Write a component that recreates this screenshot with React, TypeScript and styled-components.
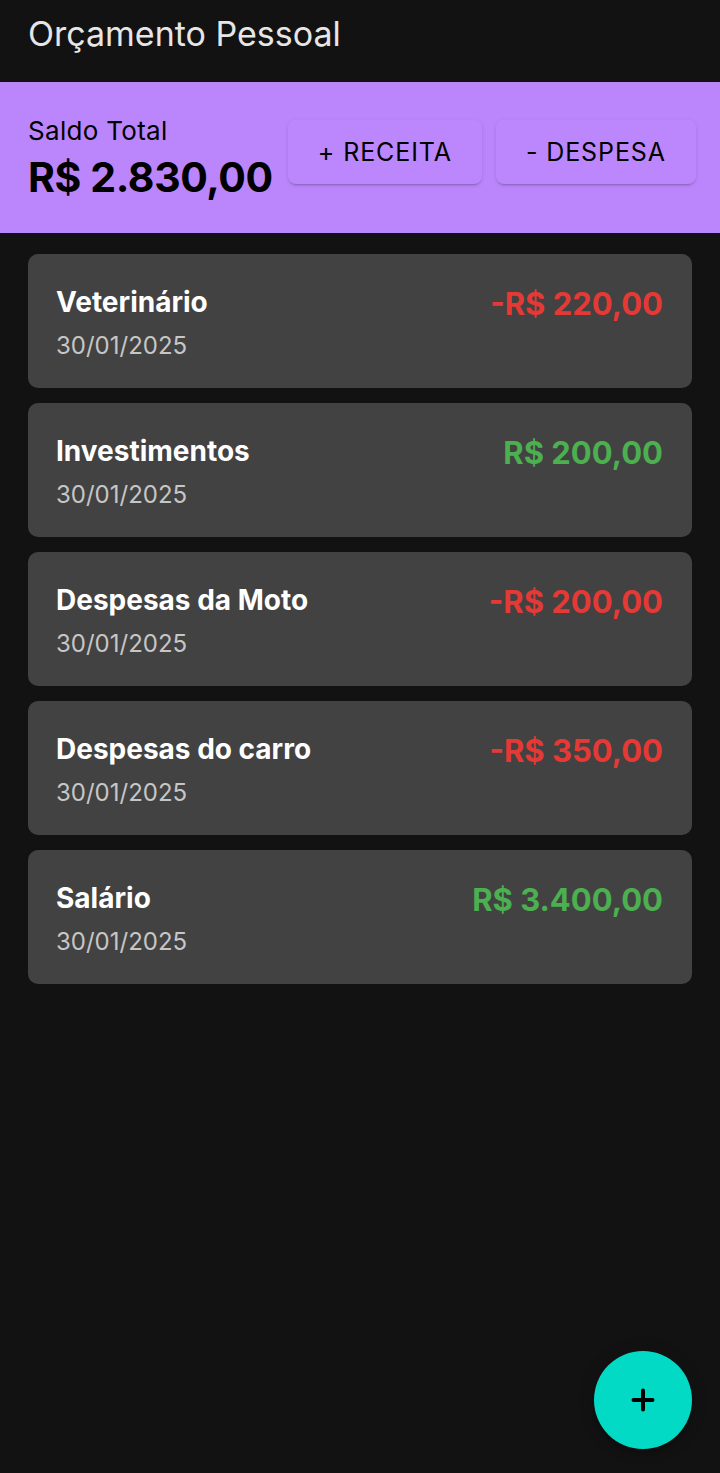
import styled, { createGlobalStyle } from 'styled-components';

interface Lancamento {
  descricao: string;
  data: string;
  valor: number;
}

const lancamentos: Lancamento[] = [
  { descricao: 'Veterinário', data: '30/01/2025', valor: -220 },
  { descricao: 'Investimentos', data: '30/01/2025', valor: 200 },
  { descricao: 'Despesas da Moto', data: '30/01/2025', valor: -200 },
  { descricao: 'Despesas do carro', data: '30/01/2025', valor: -350 },
  { descricao: 'Salário', data: '30/01/2025', valor: 3400 },
];

const formatar = (valor: number) => {
  const abs = Math.abs(valor)
    .toFixed(2)
    .replace('.', ',')
    .replace(/\B(?=(\d{3})+(?!\d))/g, '.');
  return `${valor < 0 ? '-' : ''}R$ ${abs}`;
};

const App = () => {
  const saldo = lancamentos.reduce((acc, l) => acc + l.valor, 0);

  return (
    <>
      <GlobalStyle />
      <Pagina>
        <Cabecalho>
          <Titulo>Orçamento Pessoal</Titulo>
        </Cabecalho>

        <Resumo>
          <SaldoBloco>
            <SaldoRotulo>Saldo Total</SaldoRotulo>
            <SaldoValor>{formatar(saldo)}</SaldoValor>
          </SaldoBloco>
          <Acoes>
            <BotaoAcao>+ RECEITA</BotaoAcao>
            <BotaoAcao>- DESPESA</BotaoAcao>
          </Acoes>
        </Resumo>

        <Lista>
          {lancamentos.map((l) => (
            <Cartao key={l.descricao}>
              <div>
                <Descricao>{l.descricao}</Descricao>
                <Data>{l.data}</Data>
              </div>
              <Valor $negativo={l.valor < 0}>{formatar(l.valor)}</Valor>
            </Cartao>
          ))}
        </Lista>

        <Fab aria-label="adicionar">
          <svg viewBox="0 0 24 24" width="24" height="24" aria-hidden="true">
            <path d="M12 2.5v19M2.5 12h19" stroke="#000" strokeWidth="4" strokeLinecap="round" fill="none" />
          </svg>
        </Fab>
      </Pagina>
    </>
  );
};

const GlobalStyle = createGlobalStyle`
  body {
    margin: 0;
    background: #121212;
    font-family: Inter, "Open Sans", sans-serif;
  }
  * {
    box-sizing: border-box;
  }
`;

const Pagina = styled.div`
  min-height: 1473px;
  background: #121212;
`;

const Cabecalho = styled.header`
  height: 82px;
  padding: 14px 28px;
`;

const Titulo = styled.h1`
  margin: 0;
  font-size: 34px;
  line-height: 40px;
  font-weight: 400;
  color: #e6e6e6;
`;

const Resumo = styled.section`
  display: flex;
  align-items: flex-start;
  gap: 15px;
  height: 151px;
  padding: 34px 28px 0;
  background: #bb86fc;
  color: #000;
  overflow: hidden;
`;

const SaldoBloco = styled.div`
  display: flex;
  flex-direction: column;
  flex: 0 0 auto;
`;

const SaldoRotulo = styled.span`
  font-size: 26px;
  line-height: 30px;
  font-weight: 400;
  letter-spacing: 0.3px;
`;

const SaldoValor = styled.span`
  margin-top: 5px;
  font-size: 41px;
  line-height: 52px;
  font-weight: 700;
  letter-spacing: -0.4px;
`;

const Acoes = styled.div`
  display: flex;
  gap: 14px;
  margin-top: 4px;
`;

const BotaoAcao = styled.button`
  height: 64px;
  padding: 0 30px;
  border: none;
  border-radius: 8px;
  background: #bc87fc;
  color: #000;
  font-family: inherit;
  font-size: 25px;
  font-weight: 400;
  letter-spacing: 0.9px;
  white-space: nowrap;
  box-shadow: 0 3px 1px -2px rgba(0, 0, 0, 0.12), 0 2px 2px 0 rgba(0, 0, 0, 0.08),
    0 1px 5px 0 rgba(0, 0, 0, 0.08);
  cursor: pointer;
`;

const Lista = styled.main`
  display: flex;
  flex-direction: column;
  gap: 15px;
  padding: 21px 28px;
`;

const Cartao = styled.article`
  display: flex;
  justify-content: space-between;
  align-items: flex-start;
  height: 134px;
  padding: 29px 29px 0 28px;
  border-radius: 10px;
  background: #424242;
`;

const Descricao = styled.div`
  font-size: 28px;
  line-height: 38px;
  font-weight: 700;
  color: #fff;
`;

const Data = styled.div`
  margin-top: 10px;
  font-size: 24px;
  line-height: 30px;
  color: #c6c6c6;
`;

const Valor = styled.div<{ $negativo: boolean }>`
  margin-top: 3px;
  font-size: 31px;
  line-height: 36px;
  font-weight: 700;
  color: ${({ $negativo }) => ($negativo ? '#e53935' : '#4caf50')};
`;

const Fab = styled.button`
  position: fixed;
  right: 28px;
  bottom: 24px;
  width: 98px;
  height: 98px;
  border: none;
  border-radius: 50%;
  background: #03dac6;
  display: flex;
  align-items: center;
  justify-content: center;
  box-shadow: 0 3px 5px -1px rgba(0, 0, 0, 0.2), 0 6px 10px 0 rgba(0, 0, 0, 0.14),
    0 1px 18px 0 rgba(0, 0, 0, 0.12);
  cursor: pointer;
`;

export default App;
